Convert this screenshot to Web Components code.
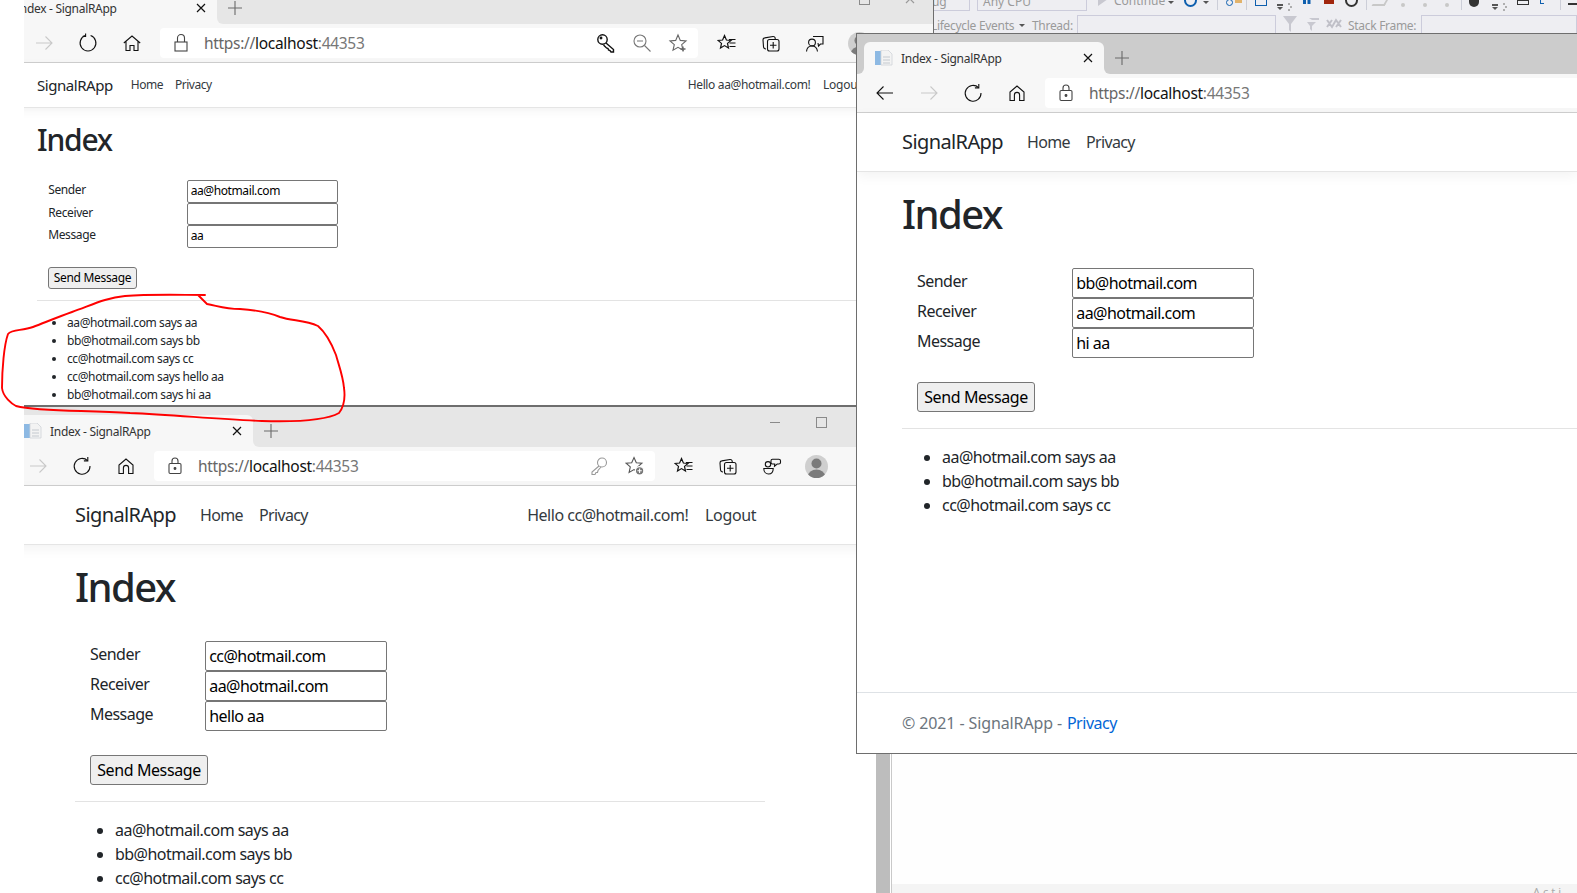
<!DOCTYPE html>
<html lang="en">
<head>
<meta charset="utf-8">
<title>SignalRApp windows</title>
<style>
  html, body { margin: 0; height: 100%; background: #fff; overflow: hidden; }
  body { position: relative; font-family: "Noto Sans", "Open Sans", sans-serif; }
  #win-a { left: -28px; top: -17px; width: 962px; height: 423px; }
  #win-b { left: -34px; top: 406px; width: 925px; height: 487px; border-bottom: 0; }
  #win-c { left: 856px; top: 33px; width: 721px; height: 721px; --tool-x: 10px; }
</style>
</head>
<body>
<browser-window id="win-b" tab-offset="40" address-width="501" strip="#e6e6e6" variant="new">
  <signal-page style="--page-x:108px;--page-w:690px;--label-w:115px;--field-w:182px"
    hello="Hello cc@hotmail.com!" sender="cc@hotmail.com" receiver="aa@hotmail.com" message="hello aa">
    <chat-message>aa@hotmail.com says aa</chat-message>
    <chat-message>bb@hotmail.com says bb</chat-message>
    <chat-message>cc@hotmail.com says cc</chat-message>
  </signal-page>
</browser-window>

<ide-backdrop></ide-backdrop>

<browser-window id="win-a" address-width="538" tab-width="238" strip="#e6e6e6" variant="old">
  <signal-page compact style="--page-x:64px;--page-w:831px;--label-w:139px;--field-w:151px"
    hello="Hello aa@hotmail.com!" sender="aa@hotmail.com" receiver="" message="aa">
    <chat-message>aa@hotmail.com says aa</chat-message>
    <chat-message>bb@hotmail.com says bb</chat-message>
    <chat-message>cc@hotmail.com says cc</chat-message>
    <chat-message>cc@hotmail.com says hello aa</chat-message>
    <chat-message>bb@hotmail.com says hi aa</chat-message>
  </signal-page>
</browser-window>

<browser-window id="win-c" tab-offset="1" strip="#cccccc" variant="new" active cropped>
  <signal-page footer style="--page-x:45px;--page-w:675px;--label-w:155px;--field-w:182px"
    sender="bb@hotmail.com" receiver="aa@hotmail.com" message="hi aa">
    <chat-message>aa@hotmail.com says aa</chat-message>
    <chat-message>bb@hotmail.com says bb</chat-message>
    <chat-message>cc@hotmail.com says cc</chat-message>
  </signal-page>
</browser-window>

<ink-note></ink-note>

<script>
const svg = (body, size = 20, extra = "") =>
  `<svg width="${size}" height="${size}" viewBox="0 0 20 20" fill="none" stroke="currentColor" stroke-width="1.1" ${extra}>${body}</svg>`;

const ICONS = {
  back: svg(`<path d="M18 10H2M8.5 3.5 2 10l6.5 6.5"/>`),
  forward: svg(`<path d="M2 10h16M11.5 3.5 18 10l-6.5 6.5"/>`),
  reload: svg(`<path d="M15.6 4.6A7.9 7.9 0 1 0 18 10"/><path d="M15.8 1v3.9h-3.9"/>`),
  reloadOld: svg(`<path d="M12.6 2.6A7.9 7.9 0 1 1 7.4 2.6"/><path d="M7.6 .6v2.8H4.8"/>`),
  home: svg(`<path d="M3 17.5V9l7-6 7 6v8.5h-4.4V12a2.6 2.6 0 0 0-5.2 0v5.5z"/>`),
  homeOld: svg(`<path d="M1.8 10 10 3l8.2 7M4 8.5v9h4v-5h4v5h4v-9"/>`),
  lock: svg(`<rect x="4" y="7.5" width="12" height="10" rx="1.2"/><path d="M7 7.5V5a3 3 0 0 1 6 0v2.5"/><circle cx="10" cy="12.5" r=".9" fill="currentColor"/>`),
  lockOld: svg(`<rect x="4" y="9" width="12" height="9"/><path d="M6.5 9V5a3.5 3.5 0 0 1 7 0v4"/>`),
  keyBold: svg(`<circle cx="6.5" cy="6.5" r="4.7" stroke-width="1.4"/><path stroke-width="1.4" d="m10 10 7.5 6.5v2.5h-2.5l-1-1.5-1.5-.5-.5-1.5-1.5-.5-3-3"/><circle cx="5" cy="5" r=".9" fill="currentColor"/>`),
  key: svg(`<circle cx="13" cy="6.5" r="4.5"/><path d="M10 10 3 16v2.5h3l1-2h1.5l.5-2 3-3.5"/>`),
  zoomOut: svg(`<circle cx="8" cy="8" r="6"/><path d="M5 8h6M12.5 12.5l6 6"/>`),
  starPlus: svg(`<path d="M10 2l2.3 5.4 5.7.5-4.3 3.7 1.3 5.6-5-2.9-5 2.9 1.3-5.6L2 7.9l5.7-.5z"/><path d="M15 13.5v5M12.5 16h5" stroke-width="1.3"/>`),
  starBadge: svg(`<path d="M9 1.5l2.3 5.2 5.6.5-4.2 3.7 1.2 5.5L9 13.6l-4.9 2.8 1.2-5.5L1.1 7.2l5.6-.5z"/><circle cx="14.6" cy="14.8" r="4.2" fill="#777" stroke="#fff"/><path d="M14.6 12.6v4.4M12.4 14.8h4.4" stroke="#fff" stroke-width="1.1"/>`),
  favorites: svg(`<path d="M7.5 2.5 9.4 7l4.6.4-3.5 3 1 4.6-4-2.4-4 2.4 1-4.6L1 7.4 5.6 7z" stroke-width="1.2"/><path d="M12 6.5h6.5M12.5 10h6M12.5 13.5h6"/>`),
  collections: svg(`<path d="M5 16A2.5 2.5 0 0 1 2.5 13.8L2 7a2 2 0 0 1 1.8-2.1L12 3.5a2 2 0 0 1 2.2 1.8V6"/><rect x="6.5" y="6.5" width="11.5" height="11.5" rx="2"/><path d="M12.2 9v6.5M9 12.2h6.5"/>`),
  feedback: svg(`<path d="M8 3.5h10V11h-2.5l-2 2-.5-3"/><circle cx="7" cy="9.5" r="3.4"/><path d="M1.5 18.5c.3-3.5 2.5-5.5 5.5-5.5s5 2 5.5 5.5"/>`),
  chat: svg(`<circle cx="6" cy="8.3" r="2.7"/><path d="M1.8 12.5h9.4c0 3.3-2 5.5-4.7 5.5s-4.7-2.2-4.7-5.5z"/><path d="M10.5 3.2h6.3c1 0 1.7.7 1.7 1.6v1.6c0 1-.7 1.6-1.7 1.6h-1.6l-2.7 2.2.2-2.2h-2.2c-.9 0-1.5-.7-1.5-1.6V4.8c0-.9.6-1.6 1.5-1.6z"/>`),
  avatar: `<svg width="23" height="23" viewBox="0 0 23 23"><clipPath id="round"><circle cx="11.5" cy="11.5" r="11.5"/></clipPath><g clip-path="url(#round)"><rect width="23" height="23" fill="#cfcfcf"/><circle cx="11.5" cy="8.5" r="5" fill="#7b7b7b"/><ellipse cx="11.5" cy="21" rx="8.5" ry="6.5" fill="#7b7b7b"/></g></svg>`,
  favicon: `<svg width="18" height="16" viewBox="0 0 18 16"><rect x="0" y="1" width="6" height="14" fill="#8db9e3"/><path d="M6 0h7l4 4v11H6z" fill="#f3f3f3" stroke="#cfd3d8" stroke-width=".8"/><path d="M8 7h7M8 10h7M8 13h7" stroke="#c4c9cf" stroke-width="1"/></svg>`,
  cross: `<svg width="10" height="10" viewBox="0 0 10 10" stroke="currentColor" stroke-width="1.2"><path d="M1 1l8 8M9 1 1 9"/></svg>`,
  plus: `<svg width="14" height="14" viewBox="0 0 14 14" stroke="#6a6a6a" stroke-width="1.1"><path d="M7 0v14M0 7h14"/></svg>`,
};

const FONT = `"Noto Sans", "Open Sans", sans-serif`;

class BrowserWindow extends HTMLElement {
  constructor() {
    super();
    const root = this.attachShadow({ mode: "open" });
    const isOld = this.getAttribute("variant") === "old";
    const strip = this.getAttribute("strip") ?? "#e6e6e6";
    const offset = Number(this.getAttribute("tab-offset") ?? 0);
    const tabWidth = this.getAttribute("tab-width") ?? "240";
    const width = this.getAttribute("address-width");
    // a cropped window runs out of the picture: its right hand tools never show
    const cropped = this.hasAttribute("cropped");
    const inner = isOld
      ? [["keyBold", "#111"], ["zoomOut", "#777"], ["starPlus", "#666"]]
      : [["key", "#999"], ["starBadge", "#555"]];
    root.innerHTML = `
      <style>
        :host {
          position: absolute;
          display: flex;
          flex-direction: column;
          box-sizing: border-box;
          overflow: hidden;
          background: #fff;
          border: 1px solid #6e6e6e;
          font-family: ${FONT};
          --strip: ${strip};
        }
        :host([cropped]) { border-right: 0; }
        .strip {
          flex: none;
          height: 40px;
          display: flex;
          background: linear-gradient(var(--strip) 50%, #f7f7f7 50%);
        }
        .lead { flex: none; width: ${6 + offset}px; background: var(--strip); border-bottom-right-radius: 6px; }
        .tab {
          flex: none;
          box-sizing: border-box;
          width: ${tabWidth}px;
          margin-top: 8px;
          padding: 0 11px 0 11px;
          display: flex;
          align-items: center;
          background: #f7f7f7;
          border-radius: 6px 6px 0 0;
          font-size: 12px;
          color: #333;
        }
        .tab .title { margin-left: 8px; flex: 1; white-space: nowrap; letter-spacing: -.3px; }
        .tab svg:last-child { color: #111; }
        .rest {
          flex: 1;
          display: flex;
          align-items: flex-start;
          background: var(--strip);
          border-bottom-left-radius: 6px;
        }
        .new-tab { margin: 17px 0 0 11px; display: flex; }
        .controls { margin-left: auto; display: flex; color: #9a9a9a; }
        .controls span { width: 46px; height: 30px; display: grid; place-items: center; }
        .min { width: 10px; height: 1px; background: #8a8a8a; }
        .max { width: 9px; height: 9px; border: 1px solid #8a8a8a; }
        .toolbar {
          flex: none;
          height: 38px;
          box-sizing: content-box;
          padding-left: var(--tool-x, 9px);
          display: flex;
          align-items: center;
          gap: 8px;
          background: #f7f7f7;
          border-bottom: 1px solid #cfcfcf;
        }
        .btn { flex: none; width: 36px; height: 36px; display: grid; place-items: center; color: #111; }
        .btn.off { color: #c9c9c9; }
        .address {
          flex: ${width ? `none` : `1`};
          box-sizing: border-box;
          ${width ? `width: ${width}px;` : ""}
          height: 30px;
          margin-left: 2px;
          margin-right: ${cropped ? 0 : 3}px;
          padding-left: 11px;
          display: flex;
          align-items: center;
          background: #fff;
          border-radius: ${cropped ? "4px 0 0 4px" : "4px"};
        }
        .lock { display: flex; color: #444; }
        .url { margin-left: 13px; font-size: 15.5px; color: #666; white-space: nowrap; letter-spacing: -.3px; }
        .url b { font-weight: 400; color: #111; }
        .url i { font-style: normal; color: #777; }
        .inner { margin-left: auto; display: flex; padding-right: 2px; }
        .inner .btn { height: 30px; }
        .page { flex: 1; min-height: 0; display: flex; }
        ::slotted(*) { flex: 1; }
      </style>
      <div class="strip">
        <div class="lead"></div>
        <div class="tab">
          ${ICONS.favicon}
          <span class="title">Index - SignalRApp</span>
          ${ICONS.cross}
        </div>
        <div class="rest">
          <span class="new-tab">${ICONS.plus}</span>
          ${cropped ? "" : `<div class="controls"><span><i class="min"></i></span><span><i class="max"></i></span><span>${ICONS.cross}</span></div>`}
        </div>
      </div>
      <div class="toolbar">
        <span class="btn ${this.hasAttribute("active") ? "" : "off"}">${ICONS.back}</span>
        <span class="btn off">${ICONS.forward}</span>
        <span class="btn">${isOld ? ICONS.reloadOld : ICONS.reload}</span>
        <span class="btn">${isOld ? ICONS.homeOld : ICONS.home}</span>
        <div class="address">
          <span class="lock">${isOld ? ICONS.lockOld : ICONS.lock}</span>
          <span class="url">https://<b>localhost</b><i>:44353</i></span>
          ${cropped ? "" : `<span class="inner">${inner.map(([n, c]) => `<span class="btn" style="color:${c}">${ICONS[n]}</span>`).join("")}</span>`}
        </div>
        ${cropped ? "" : `
        <span class="btn">${ICONS.favorites}</span>
        <span class="btn">${ICONS.collections}</span>
        <span class="btn">${isOld ? ICONS.feedback : ICONS.chat}</span>
        <span class="btn">${ICONS.avatar}</span>`}
      </div>
      <div class="page"><slot></slot></div>
    `;
  }
}

class ChatMessage extends HTMLElement {
  constructor() {
    super();
    this.attachShadow({ mode: "open" }).innerHTML = `
      <style>:host { display: list-item; list-style: disc; }</style><slot></slot>`;
  }
}

class SignalPage extends HTMLElement {
  constructor() {
    super();
    const root = this.attachShadow({ mode: "open" });
    const hello = this.getAttribute("hello");
    const field = (name) => this.getAttribute(name) ?? "";
    root.innerHTML = `
      <style>
        :host {
          display: flex;
          flex-direction: column;
          min-width: 0;
          font-size: 16px;
          line-height: 1.5;
          color: #212529;
          letter-spacing: -.033em;
        }
        :host([compact]) { font-size: 12px; }
        nav {
          flex: none;
          height: 3.625em;
          padding-left: var(--page-x);
          display: flex;
          align-items: center;
          background: #fff;
          border-bottom: 1px solid #e5e5e5;
          box-shadow: 0 .25em .75em rgba(0, 0, 0, .05);
        }
        .bar { width: var(--page-w); display: flex; align-items: center; }
        .brand { font-size: 1.25em; margin-right: 1.2em; letter-spacing: -.03em; }
        .link { margin-right: 1em; color: #343a40; letter-spacing: -.04em; }
        .who { margin-left: auto; margin-right: 1.05em; color: #343a40; letter-spacing: -.03em; }
        .out { margin-right: .55em; color: #343a40; letter-spacing: -.022em; }
        main { flex: 1; padding: 1.125em 0 0 var(--page-x); }
        :host([compact]) main { padding-top: 14.5px; }
        .wrap { width: var(--page-w); }
        h1 { margin: 0 0 .75em; font-size: 2.5em; font-weight: 500; line-height: 1.2; letter-spacing: -.04em; }
        :host([compact]) h1 { margin-bottom: 22px; }
        form { margin: 0 0 1.5em .9375em; display: grid; grid-template-columns: var(--label-w) var(--field-w); grid-auto-rows: 1.875em; }
        :host([compact]) form { margin-bottom: 19px; }
        form > span:not(.value) { padding-top: .06em; }
        :host([compact]) form > span:not(.value) { padding-top: 1px; }
        .value {
          box-sizing: border-box;
          height: 1.875em;
          padding: 0 .2em;
          display: flex;
          align-items: center;
          border: 1px solid #767676;
          border-radius: 2px;
          color: #000;
          white-space: nowrap;
        }
        button {
          display: block;
          box-sizing: border-box;
          width: 7.375em;
          height: 1.875em;
          margin: 0 0 1em .9375em;
          padding: 0;
          background: #efefef;
          border: 1px solid #767676;
          border-radius: 3px;
          font: inherit;
          letter-spacing: -.025em;
          color: #000;
        }
        :host([compact]) button { margin-bottom: 11px; }
        hr { margin: 0 0 1em; border: 0; border-top: 1px solid #e3e3e3; }
        :host([compact]) hr { margin-bottom: 13px; }
        .list { padding-left: 2.5em; }
        footer {
          flex: none;
          height: 60px;
          padding-left: var(--page-x);
          display: flex;
          align-items: center;
          border-top: 1px solid #dee2e6;
          color: #6c757d;
          letter-spacing: -.007em;
        }
        footer a { color: #0366d6; text-decoration: none; margin-left: .3em; letter-spacing: -.03em; }
      </style>
      <nav>
        <div class="bar">
          <span class="brand">SignalRApp</span>
          <span class="link">Home</span>
          <span class="link">Privacy</span>
          ${hello ? `<span class="who">${hello}</span><span class="out">Logout</span>` : ""}
        </div>
      </nav>
      <main>
        <div class="wrap">
          <h1>Index</h1>
          <form>
            <span>Sender</span><span class="value">${field("sender")}</span>
            <span>Receiver</span><span class="value">${field("receiver")}</span>
            <span>Message</span><span class="value">${field("message")}</span>
          </form>
          <button type="button">Send Message</button>
          <hr>
          <div class="list"><slot></slot></div>
        </div>
      </main>
      ${this.hasAttribute("footer") ? `<footer>© 2021 - SignalRApp - <a>Privacy</a></footer>` : ""}
    `;
  }
}

// the debugger behind the browsers: only its toolbars and a sliver of the editor show
class IdeBackdrop extends HTMLElement {
  constructor() {
    super();
    const root = this.attachShadow({ mode: "open" });
    const stacked = `<i class="bar2"></i><i class="caret" style="margin-top:1px"></i>`;
    // [left edge on screen, width, markup]
    const top = [
      [880, 90, `<span class="drop" style="width:90px;padding-left:28px">Debug</span>`],
      [977, 110, `<span class="drop" style="width:110px">Any CPU</span>`],
      [1098, 10, `<i class="tri"></i>`],
      [1114, 52, `<span class="txt">Continue</span>`],
      [1168, 6, `<i class="caret"></i>`],
      [1184, 13, `<i class="ring" style="border-color:#0e5fae"></i>`],
      [1203, 6, `<i class="caret"></i>`],
      [1217, 1, `<i class="sep"></i>`],
      [1223, 11, `<i class="glass"></i>`],
      [1235, 7, `<i class="blk" style="width:7px;height:9px;background:#e2b36b"></i>`],
      [1246, 1, `<i class="sep"></i>`],
      [1255, 12, `<i class="blk" style="box-sizing:border-box;width:12px;height:12px;border:1.5px solid #0e5fae"></i>`],
      [1277, 6, stacked],
      [1288, 4, `<i class="dot" style="background:#999;width:2px;height:2px;box-shadow:2px 3px #999,0 6px #999"></i>`],
      [1303, 8, `<i class="blk" style="width:2.5px;height:10px;background:#0e5fae;box-shadow:4.5px 0 #0e5fae"></i>`],
      [1324, 10, `<i class="blk" style="width:10px;height:10px;background:#a1260d"></i>`],
      [1345, 13, `<i class="ring" style="border-color:#333"></i>`],
      [1366, 1, `<i class="sep"></i>`],
      [1375, 11, `<i class="blk" style="width:11px;height:10px;border-bottom:2px solid #c8c8c8;border-right:2px solid #c8c8c8;transform:skewX(-30deg)"></i>`],
      [1401, 4, `<i class="dot"></i>`],
      [1423, 4, `<i class="dot"></i>`],
      [1445, 4, `<i class="dot"></i>`],
      [1461, 1, `<i class="sep"></i>`],
      [1469, 12, `<i class="blk" style="width:10px;height:13px;background:#333;border-radius:0 0 5px 5px"></i>`],
      [1492, 6, stacked],
      [1503, 4, `<i class="dot" style="background:#999;width:2px;height:2px;box-shadow:2px 3px #999,0 6px #999"></i>`],
      [1517, 12, `<i class="blk" style="box-sizing:border-box;width:12px;height:11px;border:1px solid #333;box-shadow:inset 0 -3px #eeeef2,inset 0 -4px #333"></i>`],
      [1540, 13, `<i class="blk" style="box-sizing:border-box;width:4px;height:10px;border-left:1.5px solid #0e5fae;border-bottom:1.5px solid #0e5fae"></i>`],
      [1560, 1, `<i class="sep"></i>`],
      [1568, 9, `<i class="blk" style="width:9px;height:1.5px;background:#333;margin-top:9px"></i>`],
    ];
    const place = (items, from) => {
      let x = from;
      return items.map(([left, width, html]) => {
        const out = `<span class="cell" style="margin-left:${left - x}px;width:${width}px">${html}</span>`;
        x = left + width;
        return out;
      }).join("");
    };
    root.innerHTML = `
      <style>
        :host {
          position: absolute;
          left: 876px;
          top: 0;
          right: 0;
          bottom: 0;
          display: flex;
          flex-direction: column;
          font: 12px/16px ${FONT};
          color: #9a9a9a;
        }
        .bars { flex: none; height: 33px; overflow: hidden; background: #eeeef2; }
        .row1 { height: 15px; margin-top: -6px; display: flex; }
        .cell { flex: none; display: block; }
        .drop {
          display: block;
          box-sizing: border-box;
          height: 17px;
          padding-left: 5px;
          line-height: 13px;
          border: 1px solid #ccccdb;
          white-space: nowrap;
          overflow: hidden;
        }
        .txt { display: block; line-height: 13px; white-space: nowrap; }
        .sep { display: block; width: 1px; height: 16px; background: #ccced8; }
        .tri { display: block; width: 0; height: 0; margin-top: -2px; border-left: 10px solid #c8c8d0; border-top: 7px solid transparent; border-bottom: 7px solid transparent; }
        .caret { display: block; width: 0; height: 0; margin-top: 7px; border: 3px solid transparent; border-top: 3px solid #555; }
        .bar2 { display: block; width: 6px; height: 1.5px; margin-top: 10px; background: #555; }
        .ring { display: block; box-sizing: border-box; width: 13px; height: 13px; border: 2.5px solid; border-radius: 50%; }
        .glass { display: block; box-sizing: border-box; width: 7px; height: 7px; margin: 5px 0 0 3px; border: 1.5px solid #0e5fae; border-radius: 50%; }
        .blk { display: block; }
        .dot { display: block; width: 4px; height: 4px; margin-top: 9px; border-radius: 50%; background: #c8c8c8; }
        .row2 { height: 18px; display: flex; align-items: center; white-space: nowrap; margin-top: 6px; padding-left: 55px; letter-spacing: -.3px; }
        .row2 > span:not(.box) { padding-top: 4px; flex: none; }
        .row2 .box { align-self: stretch; box-sizing: border-box; border: 1px solid #ccccdb; border-bottom: 0; }
        .funnel { flex: none; }
        .body { flex: 1; display: flex; min-height: 0; }
        .rail { flex: none; width: 14px; background: #bdbdbd; border-right: 1px solid #fff; }
        .pane { flex: 1; display: flex; flex-direction: column; justify-content: flex-end; background: #fefefe; border-left: 1px solid #c9c9c9; }
        .foot { height: 9px; overflow: hidden; padding-left: 641px; background: #f4f4f4; font-size: 11px; line-height: 16px; letter-spacing: 3px; color: #aaa; }
      </style>
      <div class="bars">
        <div class="row1">${place(top, 876)}</div>
        <div class="row2">
          <span style="width:82px">Lifecycle Events</span>
          <i class="caret" style="margin:5px 7px 0 6px;flex:none"></i>
          <span style="width:45px">Thread:</span>
          <span class="box" style="width:199px;flex:none"></span>
          <svg class="funnel" style="margin-left:6px" width="16" height="18" viewBox="0 0 16 18" fill="#c8c8d0"><path d="M1 1h14L9 9v8L7 15V9z"/></svg>
          <svg class="funnel" style="margin-left:6px" width="16" height="18" viewBox="0 0 16 18" fill="#c8c8d0"><path d="M5 3h10v2H8zM3 7h9L8 11v5l-2-2v-3z"/></svg>
          <svg class="funnel" style="margin-left:6px" width="16" height="18" viewBox="0 0 16 18" stroke="#c0c0c8" stroke-width="2" fill="none"><path d="M1 5l5 7 4-7 5 7M1 12l5-7M10 12l5-7"/></svg>
          <span style="margin-left:6px;width:73px">Stack Frame:</span>
          <span class="box" style="flex:1"></span>
        </div>
      </div>
      <div class="body">
        <div class="rail"></div>
        <div class="pane"><div class="foot">Acti</div></div>
      </div>
    `;
  }
}

// the red hand drawn ring, plus the blank margin the screenshot has on the left
class InkNote extends HTMLElement {
  constructor() {
    super();
    this.attachShadow({ mode: "open" }).innerHTML = `
      <style>
        :host { position: absolute; inset: 0; pointer-events: none; }
        .margin { position: absolute; left: 0; top: 0; bottom: 0; width: 24px; background: #fff; }
        svg { position: absolute; inset: 0; }
      </style>
      <div class="margin"></div>
      <svg width="1577" height="893" fill="none" stroke="#f00" stroke-width="1.9" stroke-linecap="round" stroke-linejoin="round">
        <path d="M205 295 C180 295 150 294 125 296 C105 298 92 305 72 312 C58 317 46 322 33 327 C22 331 12 329 8 334 C4 345 2 370 2 388 C3 397 12 404 16 406 C40 412 85 410 130 413 C175 415 215 419 262 421 C295 422 325 421 339 413 C345 405 345 395 344 388 C343 376 339 366 336 355 C331 342 325 332 318 326 C305 320 292 321 280 317 C268 312 255 310 240 309 C225 309 218 306 207 304 C204 301 201 298 198 295"/>
      </svg>`;
  }
}

customElements.define("browser-window", BrowserWindow);
customElements.define("chat-message", ChatMessage);
customElements.define("signal-page", SignalPage);
customElements.define("ide-backdrop", IdeBackdrop);
customElements.define("ink-note", InkNote);
</script>
</body>
</html>
